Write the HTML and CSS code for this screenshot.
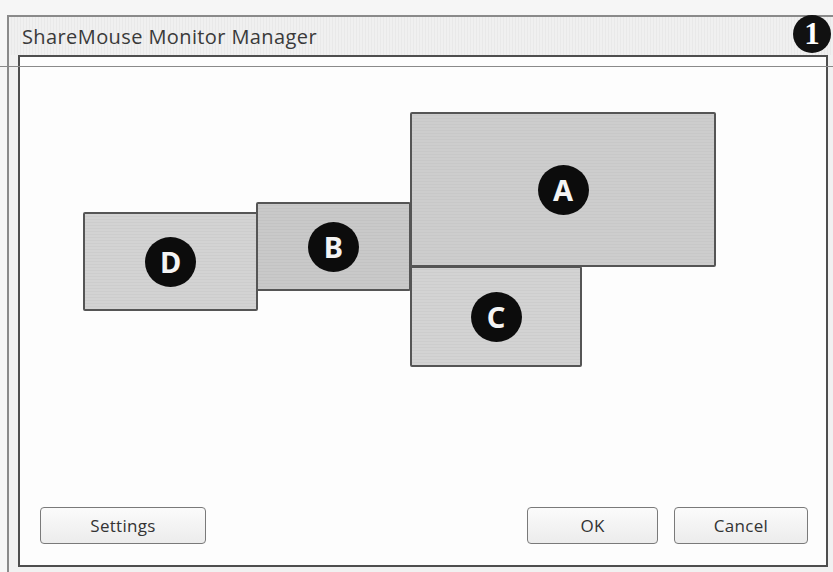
FILE: index.html
```html
<!DOCTYPE html>
<html lang="en">
<head>
    <meta charset="UTF-8">
    <meta name="viewport" content="width=device-width, initial-scale=1.0">
    <title>ShareMouse Monitor Manager</title>
    <link rel="stylesheet" href="styles.css">
</head>
<body>
    <div class="window">
        <div class="titlebar">ShareMouse Monitor Manager</div>
        <div class="panel">
            <div class="canvas">
                <div class="monitor mon-a"><span class="badge">A</span></div>
                <div class="monitor mon-b"><span class="badge">B</span></div>
                <div class="monitor mon-c"><span class="badge">C</span></div>
                <div class="monitor mon-d"><span class="badge">D</span></div>
            </div>
            <div class="actions">
                <button class="btn btn-settings">Settings</button>
                <div class="spacer"></div>
                <button class="btn btn-ok">OK</button>
                <button class="btn btn-cancel">Cancel</button>
            </div>
        </div>
    </div>
    <div class="callout-line"></div>
    <div class="callout">1</div>
</body>
</html>
```

FILE: styles.css
```css
body {
    font-family: 'Open Sans', 'Noto Sans', sans-serif;
    background-color: #f6f6f6;
    margin: 0;
    width: 833px;
    height: 572px;
    overflow: hidden;
    position: relative;
}
.window {
    margin: 15px 0 0 7px;
    border-top: 2px solid #8a8a8a;
    border-left: 2px solid #8a8a8a;
    background-color: #f1f1f1;
    height: 560px;
}
.titlebar {
    height: 38px;
    padding-left: 13px;
    line-height: 40px;
    font-size: 20px;
    letter-spacing: 0.4px;
    color: #3a3a3a;
    background: repeating-linear-gradient(90deg, #f0f0f0 0, #f0f0f0 2px, #e9e9e9 2px, #e9e9e9 3px);
}
.panel {
    margin-left: 9px;
    width: 806px;
    height: 508px;
    border: 2px solid #4e4e4e;
    background-color: #fdfdfd;
    display: flex;
    flex-direction: column;
}
.canvas {
    flex: 1;
    position: relative;
}
.monitor {
    position: absolute;
    box-sizing: border-box;
    border: 2px solid #555;
    border-radius: 2px;
    background: repeating-linear-gradient(0deg, #d3d3d3 0, #d3d3d3 2px, #cdcdcd 2px, #cdcdcd 3px);
    display: flex;
    justify-content: center;
    align-items: center;
}
.mon-a {
    left: 390px;
    top: 55px;
    width: 306px;
    height: 155px;
    background: repeating-linear-gradient(0deg, #cdcdcd 0, #cdcdcd 2px, #c8c8c8 2px, #c8c8c8 3px);
}
.mon-b {
    left: 236px;
    top: 145px;
    width: 155px;
    height: 89px;
    background: repeating-linear-gradient(0deg, #c9c9c9 0, #c9c9c9 2px, #c3c3c3 2px, #c3c3c3 3px);
}
.mon-c {
    left: 390px;
    top: 209px;
    width: 172px;
    height: 101px;
}
.mon-d {
    left: 63px;
    top: 155px;
    width: 175px;
    height: 99px;
}
.badge {
    width: 51px;
    height: 50px;
    border-radius: 50%;
    background-color: #0c0c0c;
    color: #f4f4f4;
    font-family: 'Noto Sans', sans-serif;
    font-weight: bold;
    font-size: 29px;
    line-height: 50px;
    text-align: center;
}
.actions {
    display: flex;
    align-items: center;
    padding: 0 18px 21px 20px;
    gap: 16px;
}
.spacer {
    flex: 1;
}
.btn {
    height: 37px;
    border: 1px solid #7a7a7a;
    border-radius: 4px;
    background: linear-gradient(#fbfbfb, #ececec);
    font-family: 'Open Sans', 'Noto Sans', sans-serif;
    font-size: 17px;
    letter-spacing: 0.3px;
    color: #333;
    padding: 0;
}
.btn-settings {
    width: 166px;
}
.btn-ok {
    width: 131px;
}
.btn-cancel {
    width: 134px;
}
.callout-line {
    position: absolute;
    left: 0;
    top: 66px;
    width: 833px;
    height: 1px;
    background-color: #8a8a8a;
}
.callout {
    position: absolute;
    left: 793px;
    top: 15px;
    width: 38px;
    height: 38px;
    border-radius: 50%;
    background-color: #111;
    color: #fff;
    font-family: 'Liberation Serif', serif;
    font-weight: bold;
    font-size: 31px;
    line-height: 38px;
    text-align: center;
}
```
